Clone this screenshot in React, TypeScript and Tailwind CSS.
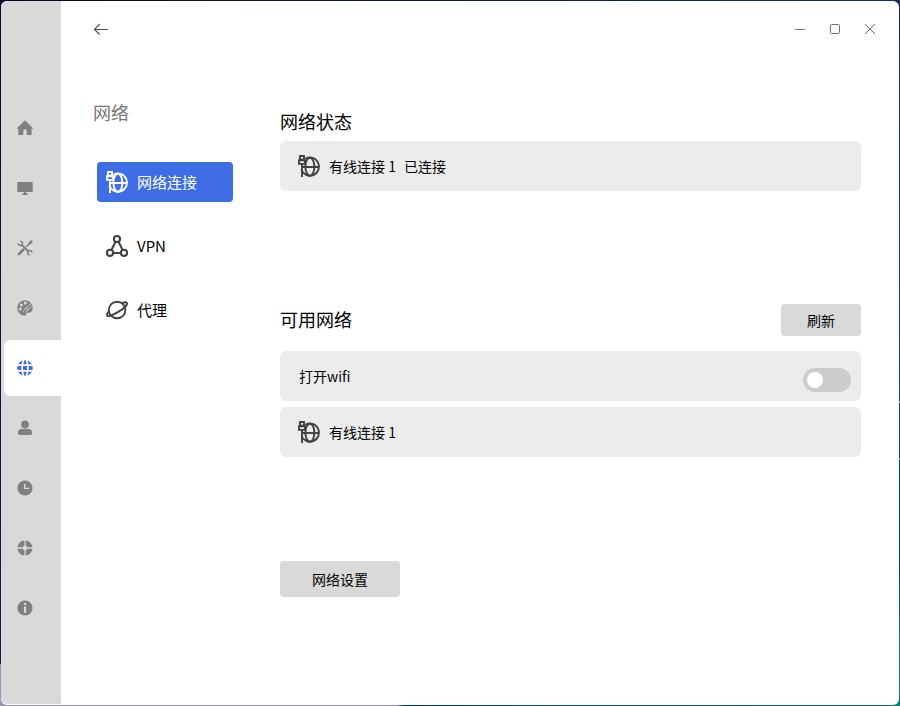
import React from "react";

type IconProps = { className?: string };

const HomeIcon = () => (
  <svg width="16" height="16" viewBox="0 0 16 16" fill="currentColor">
    <path d="M8 .3 15.8 8v1h-1.2v5.9H9.700V11a1.7 1.7 0 0 0-3.4 0v3.9H1.4V9H.2V8z" />
  </svg>
);

const MonitorIcon = () => (
  <svg width="16" height="16" viewBox="0 0 16 16" fill="currentColor">
    <path d="M1 2h14q.7 0 .7.7v8.6q0 .7-.7.7H9v1.3h1.6V15H5.4v-1.7H7V12H1q-.7 0-.7-.7V2.700Q.3 2 1 2z" />
  </svg>
);

const ToolsIcon = () => (
  <svg width="16" height="16" viewBox="0 0 16 16" fill="none" stroke="currentColor">
    <path d="M9.300 6.700 14 2" strokeWidth="1.500" />
    <path d="M13 3 14.400 1.600" strokeWidth="2.600" strokeLinecap="round" />
    <path d="m1.900 14.100 4.300-4.300" strokeWidth="2.700" strokeLinecap="round" />
    <path d="m4.700 4.700 6.800 6.800" strokeWidth="2" />
    <path d="M3.300 1a2.500 2.500 0 0 1 1.500 4.100A2.500 2.500 0 0 1 1 3.300M12.700 15a2.500 2.500 0 0 1-1.500-4.100A2.500 2.500 0 0 1 15 12.700" strokeWidth="1.600" />
  </svg>
);

const PaletteIcon = () => (
  <svg width="16" height="16" viewBox="0 0 16 16">
    <path fill="currentColor" d="M8 .3A7.700 7.700 0 1 0 8 15.700c1 0 .6-1.400 1.500-2.400 1.500-1.600 5 .6 6.100-4.100A7.800 7.800 0 0 0 8 .3z" />
    <g fill="#d9d9d9">
      <circle cx="3.200" cy="9" r="1.500" />
      <circle cx="4.400" cy="5" r="1.500" />
      <circle cx="8.300" cy="3" r="1.500" />
    </g>
    <path d="m5.500 11.800 8.700-8.300M8.300 12.400l6.500-6" stroke="#d9d9d9" strokeWidth="1" />
    <path d="m8.300 7.200 2.700 2.700" stroke="#d9d9d9" strokeWidth=".8" />
  </svg>
);

const GlobeIcon = () => (
  <svg width="16" height="16" viewBox="0 0 16 16">
    <circle cx="8" cy="8" r="7.800" fill="currentColor" />
    <g fill="none" stroke="#fff" strokeWidth="1.600">
      <path d="M0 5.100h16M0 10.900h16" />
      <path d="M6.600 0Q3.700 8 6.600 16M9.400 0q2.900 8 0 16" />
    </g>
  </svg>
);

const UserIcon = () => (
  <svg width="16" height="16" viewBox="0 0 16 16" fill="currentColor">
    <circle cx="8" cy="4.500" r="3.900" />
    <path d="M4.200 9h7.600Q15 9.300 15 12.500v.8q0 1.700-1.700 1.700H2.700Q1 15 1 13.300v-.8Q1 9.300 4.200 9z" />
  </svg>
);

const ClockIcon = () => (
  <svg width="16" height="16" viewBox="0 0 16 16">
    <circle cx="8" cy="8" r="7.600" fill="currentColor" />
    <path d="M7.700 3.800v4.500h4.500" stroke="#d9d9d9" strokeWidth="1.300" fill="none" />
  </svg>
);

const QuarterIcon = () => (
  <svg width="16" height="16" viewBox="0 0 16 16">
    <circle cx="8" cy="8" r="7.600" fill="currentColor" />
    <path d="M8 0v16M0 8h16" stroke="#d9d9d9" strokeWidth="1.300" />
    <circle cx="8" cy="8" r="2.300" fill="#d9d9d9" />
  </svg>
);

const InfoIcon = () => (
  <svg width="16" height="16" viewBox="0 0 16 16">
    <circle cx="8" cy="8" r="7.600" fill="currentColor" />
    <path d="M6.900 2.900h2.200v2H6.900zM6.900 6.500h2.200v6.500H6.900z" fill="#d9d9d9" />
  </svg>
);

const WiredIcon = ({ className }: IconProps) => (
  <svg className={className} width="24" height="24" viewBox="0 0 24 24" fill="none" stroke="currentColor" strokeWidth="1.900">
    <path d="M8.400 4.700A9.100 9.100 0 1 1 4.300 15.500" />
    <path d="M5 13h17" />
    <ellipse cx="12.900" cy="12.800" rx="4.500" ry="9" />
    <path d="M3 2h4v3.800H3zM2 6.200h6v3.700H2zM5 10v13" />
  </svg>
);

const VpnIcon = () => (
  <svg width="24" height="24" viewBox="0 0 24 24" fill="none" stroke="currentColor" strokeWidth="2">
    <circle cx="12" cy="5" r="3.100" />
    <circle cx="5" cy="18.800" r="3.100" />
    <circle cx="19" cy="18.800" r="3.100" />
    <path d="M10.500 7.700 6.400 16M13.500 7.700l4.100 8.300M8 19h8" />
  </svg>
);

const PlanetIcon = () => (
  <svg width="24" height="24" viewBox="0 0 24 24" fill="none" stroke="currentColor" strokeWidth="1.900">
    <circle cx="12.100" cy="12" r="8.300" />
    <path d="M17.200 5c2.600-1.100 4.300-1 4.700 0 .7 1.800-3 5.600-8.700 8.900-5.600 3.300-10.400 5.300-11.200 3.700-.5-.9.300-2.500 2.100-4.500" />
  </svg>
);

const railItems = [HomeIcon, MonitorIcon, ToolsIcon, PaletteIcon, GlobeIcon, UserIcon, ClockIcon, QuarterIcon, InfoIcon];

const menuItems = [
  { label: "网络连接", Icon: WiredIcon, active: true },
  { label: "VPN", Icon: VpnIcon, active: false },
  { label: "代理", Icon: PlanetIcon, active: false },
];

function WiredRow({ name, status }: { name: string; status?: string }) {
  return (
    <div className="flex h-[50px] items-center rounded-md bg-[#ececec] pl-[17px] text-sm">
      <WiredIcon className="shrink-0 text-[#404040]" />
      <span className="ml-2">{name}</span>
      {status && <span className="ml-2">{status}</span>}
    </div>
  );
}

export default function App() {
  return (
    <div className="h-[706px] w-[900px] overflow-hidden bg-[linear-gradient(to_right,#9995b0_0%,#9995b0_44%,#003a62_45%,#075f65_60%,#087a6b_100%)] font-['Noto_Sans_CJK_SC',sans-serif] text-black">
      <div className="h-full w-full bg-[linear-gradient(to_bottom,#060a2a_0%,#101b4c_80%,#101b4c_94%,transparent_94%)] bg-[length:6px_100%] bg-no-repeat">
        <div className="h-full w-full bg-[linear-gradient(to_bottom,#1c2863_0px,#174176_401px,#b5c3d3_401px,#b5c3d3_403px,#0d3e6d_403px,#0d3e6d_458px,#8fa5bc_458px,#8fa5bc_460px,#003a62_460px,#003a62_565px,#08826f_635px)] bg-[length:6px_100%] bg-right bg-no-repeat">
          <div className="h-full w-full bg-[linear-gradient(to_right,#030824,#1d2b65)] bg-[length:100%_6px] bg-no-repeat p-px">
            <div className="flex h-full overflow-hidden rounded-md bg-white">
              <nav className="mb-px flex w-[60px] shrink-0 flex-col gap-1 rounded-bl-md bg-[#d9d9d9] pt-[99px] pl-[3px]">
                {railItems.map((Icon, i) => (
                  <div key={i} className={i === 4 ? "flex h-14 items-center rounded-l-md bg-white pl-[13px] text-[#3e6de5]" : "flex h-14 items-center pl-[13px] text-[#808080]"}>
                    <Icon />
                  </div>
                ))}
              </nav>
              <div className="flex min-w-0 flex-1 flex-col">
                <header className="flex h-14 items-center justify-between pr-[23px] pl-8">
                  <svg width="16" height="16" viewBox="0 0 16 16" fill="none" stroke="#505050" strokeWidth="1.100">
                    <path d="M15 8.500H1.800M6.700 3 1.500 8.500 6.700 13.500" />
                  </svg>
                  <div className="flex gap-[23px] text-[#727272]">
                    <svg width="12" height="12" viewBox="0 0 12 12" fill="none" stroke="currentColor"><path d="M1 6.500h10" /></svg>
                    <svg width="12" height="12" viewBox="0 0 12 12" fill="none" stroke="currentColor"><rect x="1.500" y="1.500" width="9" height="9" rx="1" /></svg>
                    <svg width="12" height="12" viewBox="0 0 12 12" fill="none" stroke="currentColor"><path d="m1 1 10 10M11 1 1 11" /></svg>
                  </div>
                </header>
                <div className="flex flex-1">
                  <aside className="w-[219px] shrink-0 pt-[41px] pl-8">
                    <h1 className="h-7 text-lg leading-7 text-[#777]">网络</h1>
                    <ul className="mt-9 ml-1 flex w-[136px] flex-col gap-6">
                      {menuItems.map(({ label, Icon, active }) => (
                        <li key={label} className={active ? "flex h-10 items-center gap-2 rounded bg-[#3e6de5] pl-2 text-[15px] text-white" : "flex h-10 items-center gap-2 pl-2 text-[15px]"}>
                          <span className={active ? "text-white" : "text-[#404040]"}><Icon /></span>
                          {label}
                        </li>
                      ))}
                    </ul>
                  </aside>
                  <main className="w-[581px] pt-[50px]">
                    <h2 className="h-7 text-lg leading-7">网络状态</h2>
                    <div className="mt-1.5">
                      <WiredRow name="有线连接 1" status="已连接" />
                    </div>
                    <div className="mt-[113px] flex h-8 items-center justify-between">
                      <h2 className="pb-0.5 text-lg leading-7">可用网络</h2>
                      <button className="h-8 w-20 rounded bg-[#d9d9d9] text-sm">刷新</button>
                    </div>
                    <div className="mt-[15px] flex flex-col gap-1.5">
                      <div className="flex h-[50px] items-center justify-between rounded-md bg-[#ececec] pr-2.5 pl-[19px] text-sm">
                        <span>打开wifi</span>
                        <button className="mt-2 flex h-6 w-12 items-center rounded-full bg-[#ccc] pl-1">
                          <span className="h-4 w-4 rounded-full bg-white" />
                        </button>
                      </div>
                      <WiredRow name="有线连接 1" />
                    </div>
                    <button className="mt-[104px] h-9 w-[120px] rounded bg-[#d9d9d9] text-sm">网络设置</button>
                  </main>
                </div>
              </div>
            </div>
          </div>
        </div>
      </div>
    </div>
  );
}
